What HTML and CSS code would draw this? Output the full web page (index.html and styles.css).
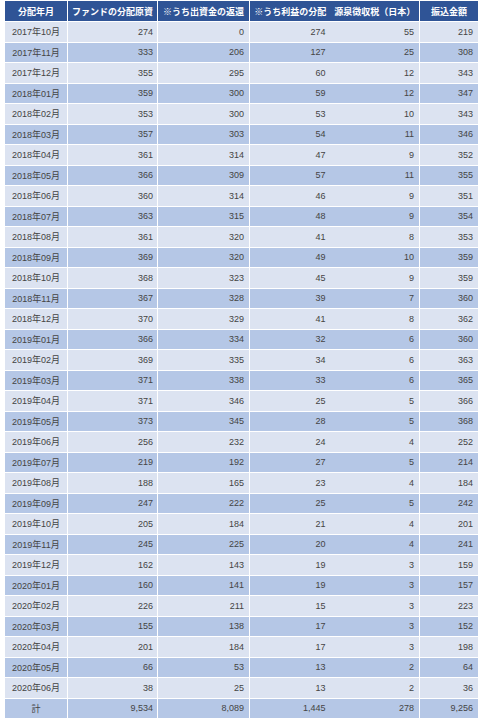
FILE: index.html
```html
<!DOCTYPE html>
<html lang="ja">
<head>
<meta charset="utf-8">
<title>分配金一覧</title>
<link rel="stylesheet" href="styles.css">
</head>
<body>
<table class="dist">
  <colgroup>
    <col class="c1"><col class="c2"><col class="c3"><col class="c4"><col class="c5"><col class="c6">
  </colgroup>
  <thead>
    <tr>
      <th>分配年月</th>
      <th>ファンドの分配原資</th>
      <th>※うち出資金の返還</th>
      <th>※うち利益の分配</th>
      <th class="nb">源泉徴収税（日本）</th>
      <th>振込金額</th>
    </tr>
  </thead>
  <tbody>
    <tr><td>2017年10月</td><td>274</td><td>0</td><td>274</td><td class="nb">55</td><td>219</td></tr>
    <tr><td>2017年11月</td><td>333</td><td>206</td><td>127</td><td class="nb">25</td><td>308</td></tr>
    <tr><td>2017年12月</td><td>355</td><td>295</td><td>60</td><td class="nb">12</td><td>343</td></tr>
    <tr><td>2018年01月</td><td>359</td><td>300</td><td>59</td><td class="nb">12</td><td>347</td></tr>
    <tr><td>2018年02月</td><td>353</td><td>300</td><td>53</td><td class="nb">10</td><td>343</td></tr>
    <tr><td>2018年03月</td><td>357</td><td>303</td><td>54</td><td class="nb">11</td><td>346</td></tr>
    <tr><td>2018年04月</td><td>361</td><td>314</td><td>47</td><td class="nb">9</td><td>352</td></tr>
    <tr><td>2018年05月</td><td>366</td><td>309</td><td>57</td><td class="nb">11</td><td>355</td></tr>
    <tr><td>2018年06月</td><td>360</td><td>314</td><td>46</td><td class="nb">9</td><td>351</td></tr>
    <tr><td>2018年07月</td><td>363</td><td>315</td><td>48</td><td class="nb">9</td><td>354</td></tr>
    <tr><td>2018年08月</td><td>361</td><td>320</td><td>41</td><td class="nb">8</td><td>353</td></tr>
    <tr><td>2018年09月</td><td>369</td><td>320</td><td>49</td><td class="nb">10</td><td>359</td></tr>
    <tr><td>2018年10月</td><td>368</td><td>323</td><td>45</td><td class="nb">9</td><td>359</td></tr>
    <tr><td>2018年11月</td><td>367</td><td>328</td><td>39</td><td class="nb">7</td><td>360</td></tr>
    <tr><td>2018年12月</td><td>370</td><td>329</td><td>41</td><td class="nb">8</td><td>362</td></tr>
    <tr><td>2019年01月</td><td>366</td><td>334</td><td>32</td><td class="nb">6</td><td>360</td></tr>
    <tr><td>2019年02月</td><td>369</td><td>335</td><td>34</td><td class="nb">6</td><td>363</td></tr>
    <tr><td>2019年03月</td><td>371</td><td>338</td><td>33</td><td class="nb">6</td><td>365</td></tr>
    <tr><td>2019年04月</td><td>371</td><td>346</td><td>25</td><td class="nb">5</td><td>366</td></tr>
    <tr><td>2019年05月</td><td>373</td><td>345</td><td>28</td><td class="nb">5</td><td>368</td></tr>
    <tr><td>2019年06月</td><td>256</td><td>232</td><td>24</td><td class="nb">4</td><td>252</td></tr>
    <tr><td>2019年07月</td><td>219</td><td>192</td><td>27</td><td class="nb">5</td><td>214</td></tr>
    <tr><td>2019年08月</td><td>188</td><td>165</td><td>23</td><td class="nb">4</td><td>184</td></tr>
    <tr><td>2019年09月</td><td>247</td><td>222</td><td>25</td><td class="nb">5</td><td>242</td></tr>
    <tr><td>2019年10月</td><td>205</td><td>184</td><td>21</td><td class="nb">4</td><td>201</td></tr>
    <tr><td>2019年11月</td><td>245</td><td>225</td><td>20</td><td class="nb">4</td><td>241</td></tr>
    <tr><td>2019年12月</td><td>162</td><td>143</td><td>19</td><td class="nb">3</td><td>159</td></tr>
    <tr><td>2020年01月</td><td>160</td><td>141</td><td>19</td><td class="nb">3</td><td>157</td></tr>
    <tr><td>2020年02月</td><td>226</td><td>211</td><td>15</td><td class="nb">3</td><td>223</td></tr>
    <tr><td>2020年03月</td><td>155</td><td>138</td><td>17</td><td class="nb">3</td><td>152</td></tr>
    <tr><td>2020年04月</td><td>201</td><td>184</td><td>17</td><td class="nb">3</td><td>198</td></tr>
    <tr><td>2020年05月</td><td>66</td><td>53</td><td>13</td><td class="nb">2</td><td>64</td></tr>
    <tr><td>2020年06月</td><td>38</td><td>25</td><td>13</td><td class="nb">2</td><td>36</td></tr>
    <tr><td>計</td><td>9,534</td><td>8,089</td><td>1,445</td><td class="nb">278</td><td>9,256</td></tr>
  </tbody>
</table>
</body>
</html>
```
FILE: styles.css
```css
html, body {
  margin: 0;
  padding: 0;
  background: #ffffff;
}

.dist {
  margin-left: 4px;
  border-collapse: collapse;
  table-layout: fixed;
  width: 474px;
  font-family: "Liberation Sans", "Noto Sans CJK JP", sans-serif;
  font-size: 9px;
  color: #444444;
}

.c1 { width: 63px; }
.c2 { width: 90px; }
.c3 { width: 92px; }
.c4 { width: 81px; }
.c5 { width: 89px; }
.c6 { width: 59px; }

.dist th,
.dist td {
  border: 1px solid #ffffff;
  padding: 0 5px 0 0;
  white-space: nowrap;
  overflow: hidden;
}

.dist th {
  background: #2f5496;
  color: #ffffff;
  font-weight: bold;
  text-align: center;
  padding: 0;
  height: 20px;
}

.dist tbody tr {
  height: 20.5px;
}

.dist td {
  text-align: right;
}

.dist td:first-child {
  text-align: center;
  padding: 0;
}

.dist td:nth-child(2) {
  padding-right: 4px;
}

.dist .nb {
  border-left-style: hidden;
}

.dist tbody tr:nth-child(odd) td {
  background: #dce3f1;
}

.dist tbody tr:nth-child(even) td {
  background: #b5c7e6;
}
```
